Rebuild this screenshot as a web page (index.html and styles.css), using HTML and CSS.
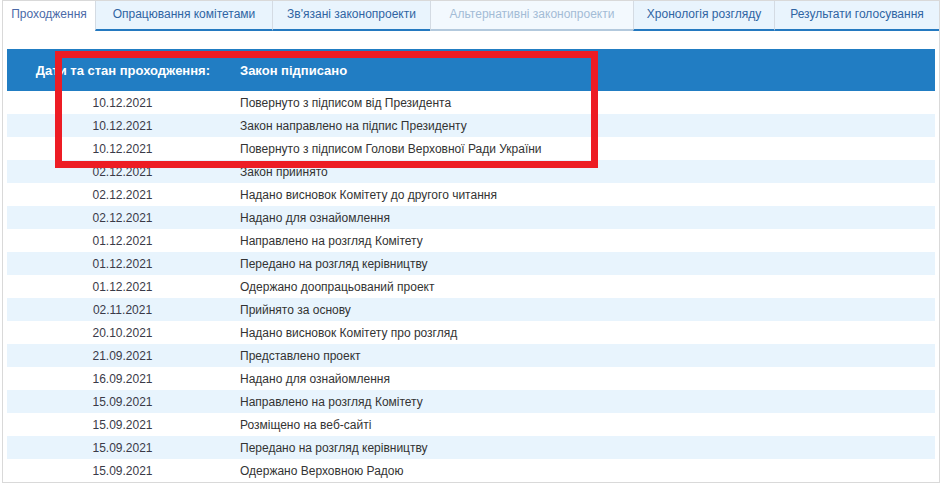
FILE: index.html
```html
<!DOCTYPE html>
<html lang="uk">
<head>
<meta charset="utf-8">
<title>Проходження</title>
<link rel="stylesheet" href="styles.css">
</head>
<body>
<div class="panel">
  <div class="tabs">
    <div class="tab active t1">Проходження</div>
    <div class="tab t2">Опрацювання комітетами</div>
    <div class="tab t3">Зв'язані законопроекти</div>
    <div class="tab disabled t4">Альтернативні законопроекти</div>
    <div class="tab t5">Хронологія розгляду</div>
    <div class="tab t6">Результати голосування</div>
  </div>
  <div class="content">
    <table class="history">
      <thead>
        <tr><th class="hd">Дати та стан проходження:</th><th class="hs">Закон підписано</th></tr>
      </thead>
      <tbody>
        <tr><td class="d">10.12.2021</td><td class="s">Повернуто з підписом від Президента</td></tr>
        <tr><td class="d">10.12.2021</td><td class="s">Закон направлено на підпис Президенту</td></tr>
        <tr><td class="d">10.12.2021</td><td class="s">Повернуто з підписом Голови Верховної Ради України</td></tr>
        <tr><td class="d">02.12.2021</td><td class="s">Закон прийнято</td></tr>
        <tr><td class="d">02.12.2021</td><td class="s">Надано висновок Комітету до другого читання</td></tr>
        <tr><td class="d">02.12.2021</td><td class="s">Надано для ознайомлення</td></tr>
        <tr><td class="d">01.12.2021</td><td class="s">Направлено на розгляд Комітету</td></tr>
        <tr><td class="d">01.12.2021</td><td class="s">Передано на розгляд керівництву</td></tr>
        <tr><td class="d">01.12.2021</td><td class="s">Одержано доопрацьований проект</td></tr>
        <tr><td class="d">02.11.2021</td><td class="s">Прийнято за основу</td></tr>
        <tr><td class="d">20.10.2021</td><td class="s">Надано висновок Комітету про розгляд</td></tr>
        <tr><td class="d">21.09.2021</td><td class="s">Представлено проект</td></tr>
        <tr><td class="d">16.09.2021</td><td class="s">Надано для ознайомлення</td></tr>
        <tr><td class="d">15.09.2021</td><td class="s">Направлено на розгляд Комітету</td></tr>
        <tr><td class="d">15.09.2021</td><td class="s">Розміщено на веб-сайті</td></tr>
        <tr><td class="d">15.09.2021</td><td class="s">Передано на розгляд керівництву</td></tr>
        <tr><td class="d">15.09.2021</td><td class="s">Одержано Верховною Радою</td></tr>
      </tbody>
    </table>
  </div>
</div>
<div class="highlight"></div>
</body>
</html>
```

FILE: styles.css
```css
html, body {
  margin: 0;
  padding: 0;
  background: #ffffff;
}
body {
  position: relative;
  font-family: "Liberation Sans", Arial, sans-serif;
  font-size: 12px;
  color: #333333;
}
.panel {
  margin-left: 2px;
  width: 938px;
  box-sizing: border-box;
  border: 1px solid #d9d9d9;
}
.tabs {
  display: flex;
  height: 30px;
}
.tab {
  box-sizing: border-box;
  height: 30px;
  flex: 0 0 auto;
  display: flex;
  align-items: center;
  justify-content: center;
  padding-bottom: 3px;
  background: #e9f4fd;
  color: #2f64a3;
  border-left: 1px solid #d4dbe3;
  border-bottom: 2px solid #2479c0;
  white-space: nowrap;
}
.tab.active {
  background: #ffffff;
  color: #4b6aa8;
  border-left: none;
  border-bottom: 2px solid #ffffff;
}
.tab.disabled {
  background: #f3f9fe;
  color: #a3bcd6;
  border-bottom-color: #b3c9dd;
}
.t1 { width: 92px; }
.t2 { width: 177px; }
.t3 { width: 158px; }
.t4 { width: 203px; }
.t5 { width: 141px; }
.t6 { width: 165px; }
.content {
  padding: 18px 4px 0 4px;
}
.history {
  width: 928px;
  border-collapse: collapse;
  border-spacing: 0;
  table-layout: fixed;
}
.history th {
  background: #217dc3;
  color: #ffffff;
  font-weight: bold;
  font-size: 13px;
  height: 42px;
  padding: 0;
  vertical-align: middle;
}
.history th.hd {
  width: 203px;
  text-align: right;
  padding-right: 28px;
}
.history th.hs {
  text-align: left;
  padding-left: 2px;
}
.history td {
  height: 22px;
  padding: 1px 0 0 0;
  vertical-align: middle;
  line-height: 14px;
}
.history td.d {
  text-align: center;
  color: #3a3a48;
}
.history td.s {
  text-align: left;
  padding-left: 2px;
  color: #333333;
}
.history tbody tr:nth-child(even) td {
  background: #e8f4fd;
}
.highlight {
  position: absolute;
  left: 55px;
  top: 51px;
  width: 543px;
  height: 117px;
  box-sizing: border-box;
  border: 7px solid #ed1c24;
  pointer-events: none;
}
```
